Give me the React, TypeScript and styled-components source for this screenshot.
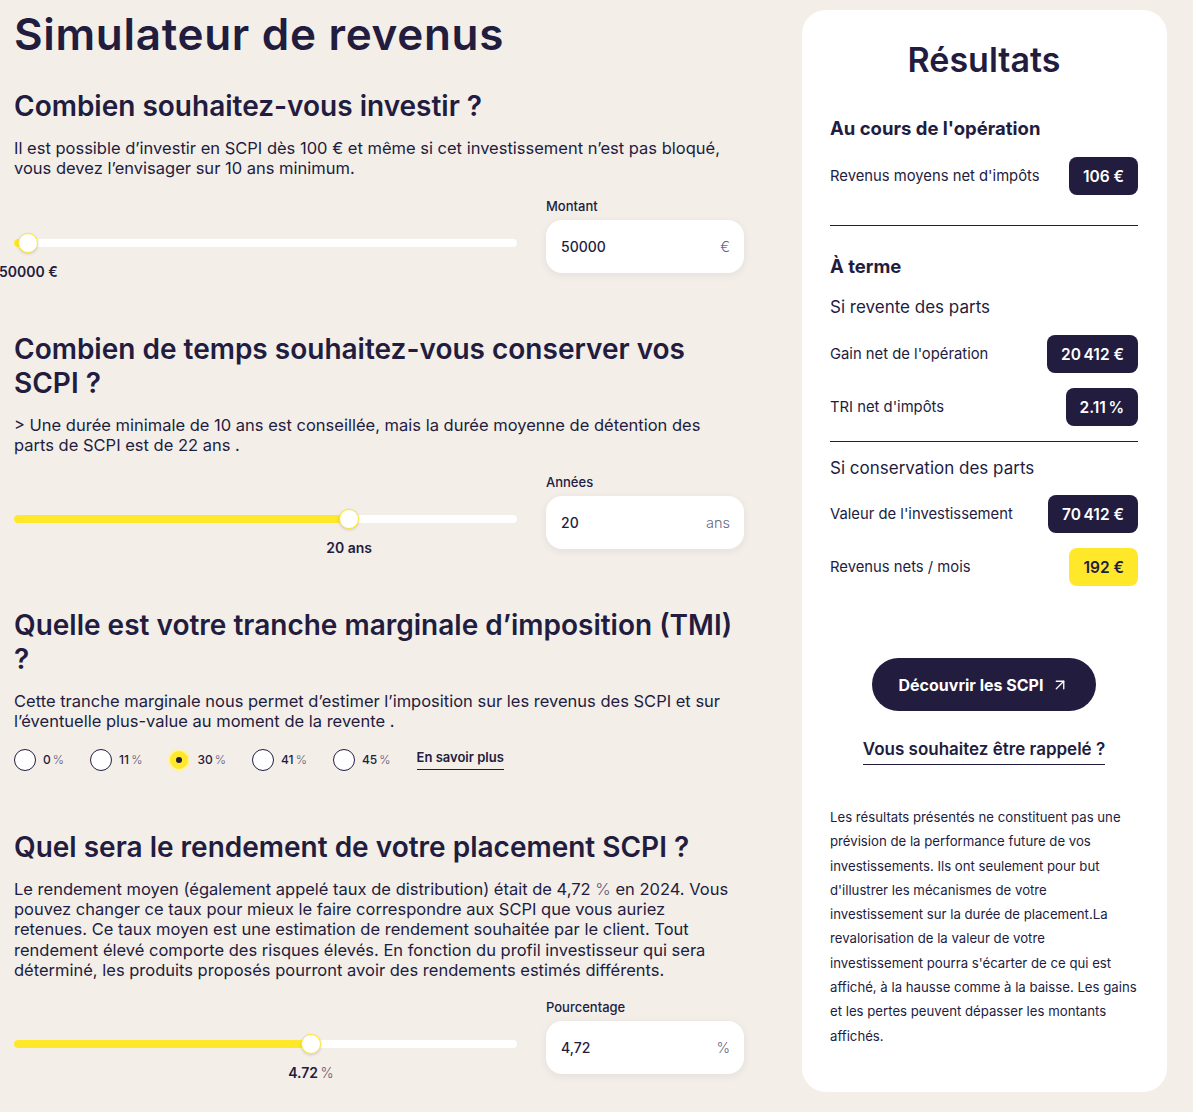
import { FC } from 'react'
import styled, { createGlobalStyle } from 'styled-components'
import { ArrowUpRight } from 'lucide-react'

const NAVY = '#221c3f'
const YELLOW = '#ffe82a'
const NNBSP = '\u202f'

const GlobalStyle = createGlobalStyle`
  body {
    margin: 0;
    background: #f3eee8;
    font-family: Inter, "Noto Sans", sans-serif;
    color: ${NAVY};
  }
  * { box-sizing: border-box; }
`

const Page = styled.div`
  display: flex;
  align-items: flex-start;
  gap: 58px;
  padding: 10px 26px 18px 14px;
`

const Main = styled.main`
  width: 730px;
  flex: 0 0 730px;
`

const Title = styled.h1`
  margin: 0;
  font-size: 44px;
  line-height: 48px;
  font-weight: 600;
  letter-spacing: 0.7px;
`

const Section = styled.section<{ $first?: boolean }>`
  margin-top: ${p => (p.$first ? 31 : 59)}px;
`

const Question = styled.h2`
  margin: 0;
  font-size: 28px;
  line-height: 34px;
  font-weight: 600;
`

const Intro = styled.p`
  max-width: 720px;
  margin: 15px 0 0;
  font-size: 16.5px;
  line-height: 20.3px;
`

const InputRow = styled.div`
  display: flex;
  align-items: flex-start;
  gap: 29px;
  margin-top: 19px;
`

const SliderArea = styled.div`
  flex: 0 0 503px;
  margin-top: 41px;
`

const Track = styled.div`
  position: relative;
  height: 8px;
  background: #fff;
  border-radius: 4px;
`

const Fill = styled.div`
  position: absolute;
  left: 0;
  top: 0;
  bottom: 0;
  background: ${YELLOW};
  border-radius: 4px;
`

const Thumb = styled.span`
  position: absolute;
  top: 50%;
  width: 20px;
  height: 20px;
  margin: -10px 0 0 -10px;
  border-radius: 50%;
  background: #fff;
  border: 1.5px solid ${YELLOW};
  box-shadow: 0 1px 3px rgba(34, 28, 63, 0.18);
`

const ThumbLabel = styled.span`
  position: absolute;
  top: 25px;
  transform: translateX(-50%);
  font-size: 14px;
  line-height: 16px;
  font-weight: 600;
  white-space: nowrap;
`

const Light = styled.span`
  font-weight: 300;
  color: #5d5875;
`

const Field = styled.div`
  flex: 0 0 198px;
  width: 198px;
  min-width: 0;
`

const FieldLabel = styled.label`
  display: block;
  font-size: 13px;
  line-height: 16px;
  font-weight: 500;
  margin-bottom: 6px;
`

const InputBox = styled.div`
  height: 53px;
  background: #fff;
  border-radius: 16px;
  box-shadow: 0 2px 8px rgba(34, 28, 63, 0.07);
  display: flex;
  align-items: center;
  padding: 0 14px 0 15px;
`

const ValueInput = styled.input`
  flex: 1;
  width: 100%;
  min-width: 0;
  border: none;
  outline: none;
  background: transparent;
  font-family: inherit;
  font-size: 14px;
  font-weight: 500;
  color: ${NAVY};
  padding: 0;
`

const Unit = styled.span`
  font-size: 14.5px;
  font-weight: 300;
  color: #6b6782;
`

const RadioRow = styled.div`
  display: flex;
  align-items: center;
  gap: 26px;
  margin-top: 17px;
`

const RadioOption = styled.label`
  display: flex;
  align-items: center;
  gap: 7px;
  font-size: 12px;
  font-weight: 500;
  cursor: pointer;
`

const RadioDot = styled.span<{ $checked?: boolean }>`
  width: 22px;
  height: 22px;
  border-radius: 50%;
  display: grid;
  place-items: center;
  border: ${p => (p.$checked ? `2.5px solid #fff3a0` : `1.5px solid ${NAVY}`)};
  background: ${p => (p.$checked ? YELLOW : '#fff')};

  &::after {
    content: '';
    display: ${p => (p.$checked ? 'block' : 'none')};
    width: 6px;
    height: 6px;
    border-radius: 50%;
    background: ${NAVY};
  }
`

const MoreLink = styled.a`
  font-size: 13px;
  font-weight: 600;
  line-height: 16px;
  padding-bottom: 4px;
  border-bottom: 1.5px solid ${NAVY};
  color: ${NAVY};
  text-decoration: none;
`

const Panel = styled.aside`
  flex: 0 0 365px;
  background: #fff;
  border-radius: 24px;
  padding: 30px 29px 44px 28px;
`

const PanelTitle = styled.h2`
  margin: 0;
  text-align: center;
  font-size: 34px;
  line-height: 40px;
  font-weight: 600;
`

const GroupTitle = styled.h3<{ $mt: number }>`
  margin: ${p => p.$mt}px 0 0;
  font-size: 18.5px;
  line-height: 24px;
  font-weight: 700;
`

const SubTitle = styled.h4<{ $mt: number }>`
  margin: ${p => p.$mt}px 0 0;
  font-size: 17px;
  line-height: 24px;
  font-weight: 400;
`

const ResultRow = styled.div<{ $mt: number }>`
  display: flex;
  align-items: center;
  justify-content: space-between;
  margin-top: ${p => p.$mt}px;
  font-size: 14.8px;
`

const Badge = styled.span<{ $yellow?: boolean }>`
  height: 38px;
  display: flex;
  align-items: center;
  padding: 0 14px;
  border-radius: 8px;
  font-size: 15.5px;
  font-weight: 600;
  background: ${p => (p.$yellow ? YELLOW : NAVY)};
  color: ${p => (p.$yellow ? NAVY : '#fff')};
`

const Divider = styled.hr<{ $mt: number }>`
  margin: ${p => p.$mt}px 0 0;
  border: none;
  border-top: 1.5px solid ${NAVY};
`

const CtaButton = styled.button`
  display: flex;
  align-items: center;
  gap: 8px;
  margin: 72px auto 0;
  height: 53px;
  padding: 0 27px;
  border: none;
  border-radius: 27px;
  background: ${NAVY};
  color: #fff;
  font-family: inherit;
  font-size: 16px;
  font-weight: 700;
  cursor: pointer;
`

const CallbackWrap = styled.div`
  margin-top: 26px;
  text-align: center;
`

const CallbackLink = styled.a`
  display: inline-block;
  font-size: 17px;
  line-height: 24px;
  font-weight: 600;
  padding-bottom: 3px;
  border-bottom: 1.5px solid ${NAVY};
  color: ${NAVY};
  text-decoration: none;
`

const Disclaimer = styled.p`
  margin: 40px 0 0;
  font-size: 13.2px;
  line-height: 24.3px;
`

interface SliderProps {
  pct: number
  label: React.ReactNode
}

// thumb is 20px, so its centre runs from 10px to width - 10px
const Slider: FC<SliderProps> = ({ pct, label }) => {
  const left = `calc(10px + (100% - 20px) * ${pct})`
  return (
    <SliderArea>
      <Track>
        <Fill style={{ width: left }} />
        <Thumb style={{ left }} />
        <ThumbLabel style={{ left }}>{label}</ThumbLabel>
      </Track>
    </SliderArea>
  )
}

interface AmountFieldProps {
  label: string
  value: string
  unit: string
}

const AmountField: FC<AmountFieldProps> = ({ label, value, unit }) => (
  <Field>
    <FieldLabel>{label}</FieldLabel>
    <InputBox>
      <ValueInput defaultValue={value} />
      <Unit>{unit}</Unit>
    </InputBox>
  </Field>
)

const tmiOptions = [0, 11, 30, 41, 45]

const App: FC = () => (
  <>
    <GlobalStyle />
    <Page>
      <Main>
        <Title>Simulateur de revenus</Title>

        <Section $first>
          <Question>Combien souhaitez-vous investir ?</Question>
          <Intro>
            Il est possible d’investir en SCPI dès 100 € et même si cet investissement n’est pas bloqué, vous
            devez l’envisager sur 10 ans minimum.
          </Intro>
          <InputRow>
            <Slider pct={0.009} label="50000 €" />
            <AmountField label="Montant" value="50000" unit="€" />
          </InputRow>
        </Section>

        <Section>
          <Question>Combien de temps souhaitez-vous conserver vos SCPI ?</Question>
          <Intro>
            &gt; Une durée minimale de 10 ans est conseillée, mais la durée moyenne de détention des parts de
            SCPI est de 22 ans .
          </Intro>
          <InputRow>
            <Slider pct={0.673} label="20 ans" />
            <AmountField label="Années" value="20" unit="ans" />
          </InputRow>
        </Section>

        <Section>
          <Question>Quelle est votre tranche marginale d’imposition (TMI) ?</Question>
          <Intro>
            Cette tranche marginale nous permet d’estimer l’imposition sur les revenus des SCPI et sur
            l’éventuelle plus-value au moment de la revente .
          </Intro>
          <RadioRow>
            {tmiOptions.map(v => (
              <RadioOption key={v}>
                <RadioDot $checked={v === 30} />
                <span>
                  {v}
                  {NNBSP}
                  <Light>%</Light>
                </span>
              </RadioOption>
            ))}
            <MoreLink href="#">En savoir plus</MoreLink>
          </RadioRow>
        </Section>

        <Section>
          <Question>Quel sera le rendement de votre placement SCPI ?</Question>
          <Intro>
            Le rendement moyen (également appelé taux de distribution) était de 4,72 <Light>%</Light> en 2024.
            Vous pouvez changer ce taux pour mieux le faire correspondre aux SCPI que vous auriez retenues. Ce
            taux moyen est une estimation de rendement souhaitée par le client. Tout rendement élevé comporte
            des risques élevés. En fonction du profil investisseur qui sera déterminé, les produits proposés
            pourront avoir des rendements estimés différents.
          </Intro>
          <InputRow>
            <Slider
              pct={0.594}
              label={
                <>
                  4.72{NNBSP}
                  <Light>%</Light>
                </>
              }
            />
            <AmountField label="Pourcentage" value="4,72" unit="%" />
          </InputRow>
        </Section>
      </Main>

      <Panel>
        <PanelTitle>Résultats</PanelTitle>

        <GroupTitle $mt={36}>Au cours de l'opération</GroupTitle>
        <ResultRow $mt={17}>
          <span>Revenus moyens net d'impôts</span>
          <Badge>106 €</Badge>
        </ResultRow>

        <Divider $mt={30} />

        <GroupTitle $mt={28}>À terme</GroupTitle>
        <SubTitle $mt={17}>Si revente des parts</SubTitle>
        <ResultRow $mt={16}>
          <span>Gain net de l'opération</span>
          <Badge>{`20${NNBSP}412 €`}</Badge>
        </ResultRow>
        <ResultRow $mt={15}>
          <span>TRI net d'impôts</span>
          <Badge>{`2.11${NNBSP}%`}</Badge>
        </ResultRow>

        <Divider $mt={15} />

        <SubTitle $mt={14}>Si conservation des parts</SubTitle>
        <ResultRow $mt={15}>
          <span>Valeur de l'investissement</span>
          <Badge>{`70${NNBSP}412 €`}</Badge>
        </ResultRow>
        <ResultRow $mt={15}>
          <span>Revenus nets / mois</span>
          <Badge $yellow>192 €</Badge>
        </ResultRow>

        <CtaButton>
          Découvrir les SCPI
          <ArrowUpRight size={18} strokeWidth={1.75} />
        </CtaButton>

        <CallbackWrap>
          <CallbackLink href="#">Vous souhaitez être rappelé ?</CallbackLink>
        </CallbackWrap>

        <Disclaimer>
          Les résultats présentés ne constituent pas une prévision de la performance future de vos
          investissements. Ils ont seulement pour but d'illustrer les mécanismes de votre investissement sur la
          durée de placement.La revalorisation de la valeur de votre investissement pourra s'écarter de ce qui
          est affiché, à la hausse comme à la baisse. Les gains et les pertes peuvent dépasser les montants
          affichés.
        </Disclaimer>
      </Panel>
    </Page>
  </>
)

export default App
